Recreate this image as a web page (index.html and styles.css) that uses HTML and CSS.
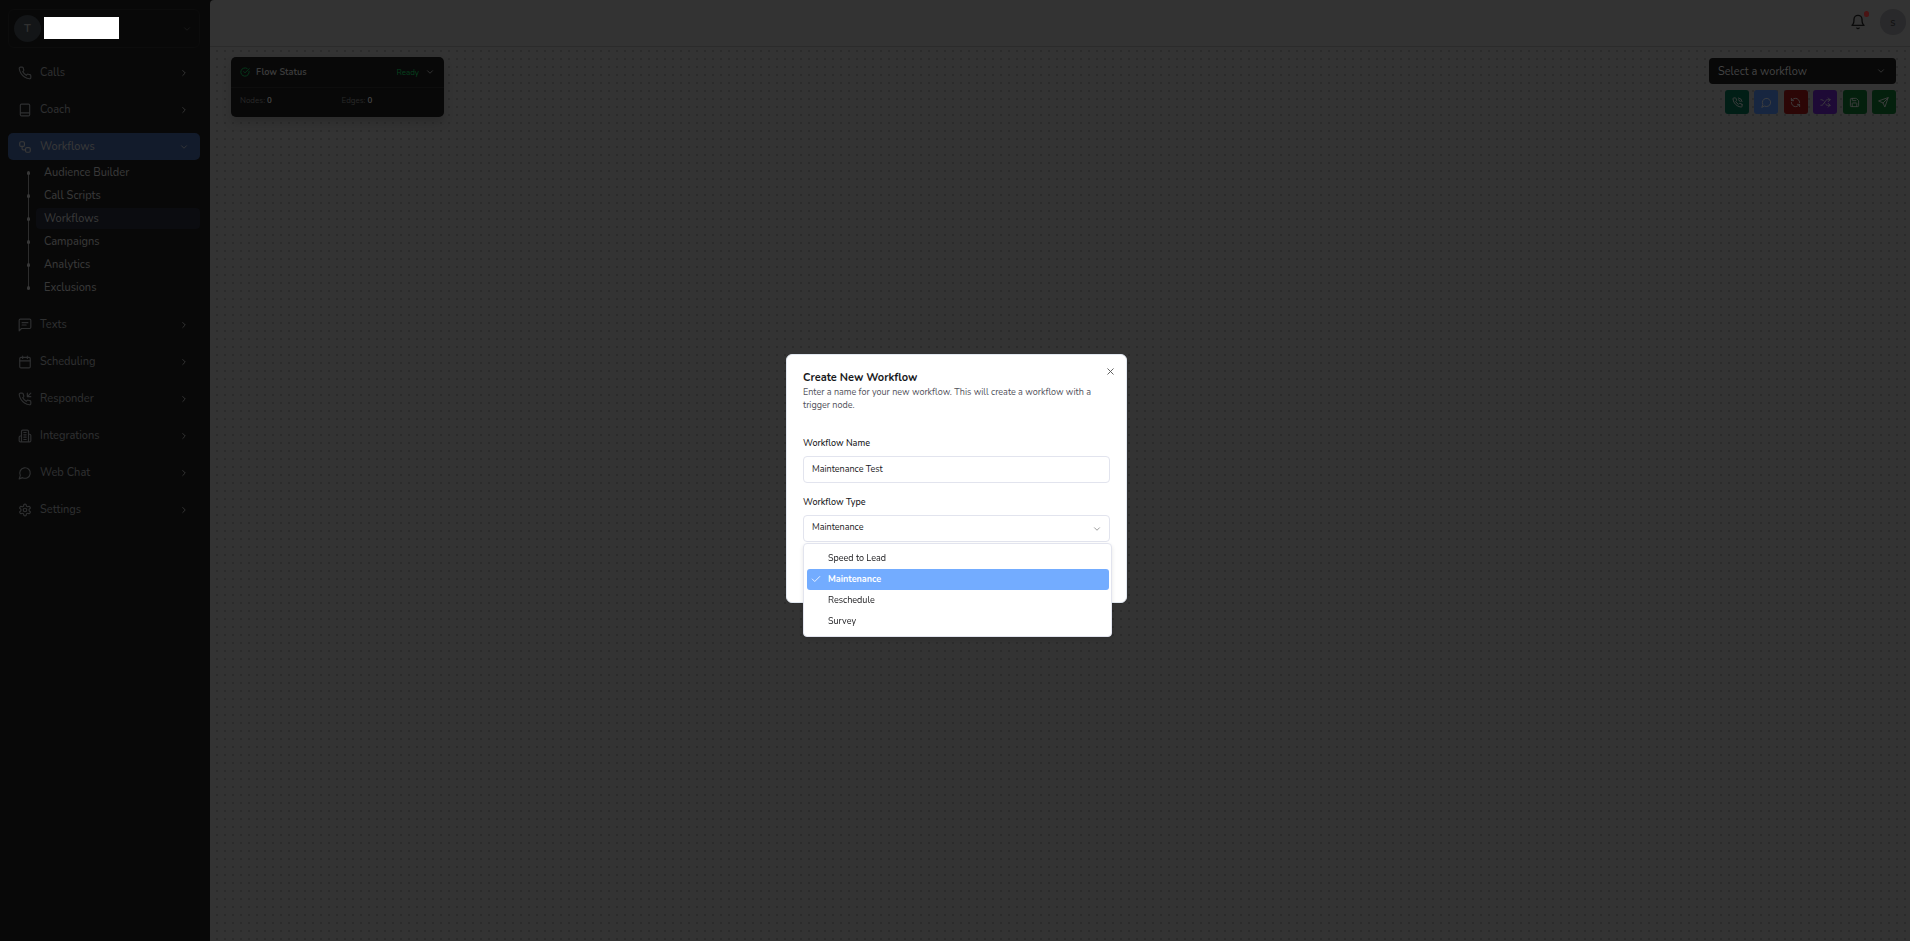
FILE: index.html
```html
<!DOCTYPE html>
<html lang="en">
<head>
  <meta charset="UTF-8">
  <title>Workflows</title>
  <link rel="stylesheet" href="styles.css">
</head>
<body>

  <!-- Shared icons -->
  <svg class="sprite" aria-hidden="true">
    <symbol id="chev-right" viewBox="0 0 24 24"><path d="m9 18 6-6-6-6"/></symbol>
    <symbol id="chev-down" viewBox="0 0 24 24"><path d="m6 9 6 6 6-6"/></symbol>
    <symbol id="phone" viewBox="0 0 24 24"><path d="M22 16.92v3a2 2 0 0 1-2.18 2 19.79 19.79 0 0 1-8.63-3.07 19.5 19.5 0 0 1-6-6 19.79 19.79 0 0 1-3.07-8.67A2 2 0 0 1 4.11 2h3a2 2 0 0 1 2 1.72c.127.96.361 1.903.7 2.81a2 2 0 0 1-.45 2.11L8.09 9.91a16 16 0 0 0 6 6l1.27-1.27a2 2 0 0 1 2.11-.45c.907.339 1.85.573 2.81.7A2 2 0 0 1 22 16.92z"/></symbol>
    <symbol id="book" viewBox="0 0 24 24"><path d="M4 17V4a2 2 0 0 1 2-2h12a2 2 0 0 1 2 2v16a2 2 0 0 1-2 2H6a2 2 0 0 1-2-2zM4 17h16"/></symbol>
    <symbol id="workflow" viewBox="0 0 24 24"><rect x="3" y="3" width="8" height="8" rx="2"/><path d="M7 11v4a2 2 0 0 0 2 2h4"/><rect x="13" y="13" width="8" height="8" rx="2"/></symbol>
    <symbol id="message" viewBox="0 0 24 24"><path d="M22 16a2 2 0 0 1-2 2H6l-4 4V4a2 2 0 0 1 2-2h16a2 2 0 0 1 2 2z"/><path d="M7 8h10M7 12h7"/></symbol>
    <symbol id="calendar" viewBox="0 0 24 24"><path d="M8 2v4M16 2v4M3 10h18"/><rect x="3" y="4" width="18" height="18" rx="2"/></symbol>
    <symbol id="phone-in" viewBox="0 0 24 24"><path d="M16 2v6h6M22 2l-6 6"/><path d="M22 16.92v3a2 2 0 0 1-2.18 2 19.79 19.79 0 0 1-8.63-3.07 19.5 19.5 0 0 1-6-6 19.79 19.79 0 0 1-3.07-8.67A2 2 0 0 1 4.11 2h3a2 2 0 0 1 2 1.72c.127.96.361 1.903.7 2.81a2 2 0 0 1-.45 2.11L8.09 9.91a16 16 0 0 0 6 6l1.27-1.27a2 2 0 0 1 2.11-.45c.907.339 1.85.573 2.81.7A2 2 0 0 1 22 16.92z"/></symbol>
    <symbol id="building" viewBox="0 0 24 24"><path d="M6 22V4a2 2 0 0 1 2-2h8a2 2 0 0 1 2 2v18ZM6 12H4a2 2 0 0 0-2 2v6a2 2 0 0 0 2 2h2M18 9h2a2 2 0 0 1 2 2v9a2 2 0 0 1-2 2h-2M10 6h4M10 10h4M10 14h4M10 18h4"/></symbol>
    <symbol id="chat" viewBox="0 0 24 24"><path d="M7.9 20A9 9 0 1 0 4 16.100L2 22Z"/></symbol>
    <symbol id="gear" viewBox="0 0 24 24"><path d="M12.220 2h-.44a2 2 0 0 0-2 2v.18a2 2 0 0 1-1 1.730l-.43.25a2 2 0 0 1-2 0l-.15-.08a2 2 0 0 0-2.730.73l-.22.38a2 2 0 0 0 .73 2.730l.15.1a2 2 0 0 1 1 1.720v.51a2 2 0 0 1-1 1.740l-.15.09a2 2 0 0 0-.73 2.730l.22.38a2 2 0 0 0 2.730.73l.15-.08a2 2 0 0 1 2 0l.43.25a2 2 0 0 1 1 1.730V20a2 2 0 0 0 2 2h.44a2 2 0 0 0 2-2v-.18a2 2 0 0 1 1-1.730l.43-.25a2 2 0 0 1 2 0l.15.08a2 2 0 0 0 2.730-.73l.22-.39a2 2 0 0 0-.73-2.730l-.15-.08a2 2 0 0 1-1-1.740v-.5a2 2 0 0 1 1-1.740l.15-.09a2 2 0 0 0 .73-2.730l-.22-.38a2 2 0 0 0-2.730-.73l-.15.08a2 2 0 0 1-2 0l-.43-.25a2 2 0 0 1-1-1.730V4a2 2 0 0 0-2-2z"/><circle cx="12" cy="12" r="3"/></symbol>
  </svg>

  <div class="app">
    <aside class="sidebar">
      <button class="team" aria-label="Switch team">
        <span class="team-avatar">T</span>
        <span class="team-name"></span>
        <svg class="chev"><use href="#chev-down"/></svg>
      </button>

      <nav class="nav">
        <a class="nav-item" href="#"><svg><use href="#phone"/></svg>Calls<svg class="chev"><use href="#chev-right"/></svg></a>
        <a class="nav-item" href="#"><svg><use href="#book"/></svg>Coach<svg class="chev"><use href="#chev-right"/></svg></a>
        <div class="nav-group">
          <a class="nav-item active" href="#"><svg><use href="#workflow"/></svg>Workflows<svg class="chev"><use href="#chev-down"/></svg></a>
          <div class="subnav">
            <a href="#">Audience Builder</a>
            <a href="#">Call Scripts</a>
            <a class="current" href="#">Workflows</a>
            <a href="#">Campaigns</a>
            <a href="#">Analytics</a>
            <a href="#">Exclusions</a>
          </div>
        </div>
        <a class="nav-item" href="#"><svg><use href="#message"/></svg>Texts<svg class="chev"><use href="#chev-right"/></svg></a>
        <a class="nav-item" href="#"><svg><use href="#calendar"/></svg>Scheduling<svg class="chev"><use href="#chev-right"/></svg></a>
        <a class="nav-item" href="#"><svg><use href="#phone-in"/></svg>Responder<svg class="chev"><use href="#chev-right"/></svg></a>
        <a class="nav-item" href="#"><svg><use href="#building"/></svg>Integrations<svg class="chev"><use href="#chev-right"/></svg></a>
        <a class="nav-item" href="#"><svg><use href="#chat"/></svg>Web Chat<svg class="chev"><use href="#chev-right"/></svg></a>
        <a class="nav-item" href="#"><svg><use href="#gear"/></svg>Settings<svg class="chev"><use href="#chev-right"/></svg></a>
      </nav>
    </aside>

    <main class="main">
      <header class="topbar">
        <button class="bell" aria-label="Notifications">
          <svg viewBox="0 0 24 24"><path d="M6 8a6 6 0 0 1 12 0c0 7 3 9 3 9H3s3-2 3-9M10.300 21a1.940 1.940 0 0 0 3.400 0"/></svg>
          <span class="bell-dot"></span>
        </button>
        <button class="user">s</button>
      </header>

      <section class="canvas">
        <div class="status">
          <div class="status-head">
            <svg class="ok" viewBox="0 0 24 24"><path d="M21.800 10A10 10 0 1 1 17 3.335M9 11l3 3L22 4"/></svg>
            <span class="status-title">Flow Status</span>
            <span class="ready">Ready</span>
            <svg class="chev"><use href="#chev-down"/></svg>
          </div>
          <div class="status-body">
            <span>Nodes: <b>0</b></span>
            <span>Edges: <b>0</b></span>
          </div>
        </div>

        <div class="tools">
          <div class="picker">
            <select aria-label="Workflow">
              <option>Select a workflow</option>
            </select>
            <svg class="chev"><use href="#chev-down"/></svg>
          </div>
          <div class="tool-row">
            <button class="tool teal" aria-label="Call"><svg viewBox="0 0 24 24"><path d="M14.050 2a9 9 0 0 1 8 7.940M14.050 6A5 5 0 0 1 18 10"/><use href="#phone"/></svg></button>
            <button class="tool blue" aria-label="Message"><svg><use href="#chat"/></svg></button>
            <button class="tool red" aria-label="Reset"><svg viewBox="0 0 24 24"><path d="M21 12a9 9 0 0 0-9-9 9.750 9.750 0 0 0-6.740 2.740L3 8M3 3v5h5M3 12a9 9 0 0 0 9 9 9.750 9.750 0 0 0 6.740-2.740L21 16M16 16h5v5"/></svg></button>
            <button class="tool purple" aria-label="Shuffle"><svg viewBox="0 0 24 24"><path d="M2 18h1.400c1.300 0 2.500-.6 3.300-1.700l6.100-8.600c.7-1.100 2-1.700 3.300-1.700H22M18 2l4 4-4 4M2 6h1.900c1.500 0 2.900.9 3.600 2.200M22 18h-5.900c-1.300 0-2.600-.7-3.300-1.800l-.5-.8M18 14l4 4-4 4"/></svg></button>
            <button class="tool green" aria-label="Save"><svg viewBox="0 0 24 24"><path d="M15.200 3a2 2 0 0 1 1.400.6l3.800 3.800a2 2 0 0 1 .6 1.400V19a2 2 0 0 1-2 2H5a2 2 0 0 1-2-2V5a2 2 0 0 1 2-2zM17 21v-7a1 1 0 0 0-1-1H8a1 1 0 0 0-1 1v7M7 3v4a1 1 0 0 0 1 1h7"/></svg></button>
            <button class="tool green" aria-label="Publish"><svg viewBox="0 0 24 24"><path d="M22 2 11 13M22 2l-7 20-4-9-9-4z"/></svg></button>
          </div>
        </div>
      </section>
    </main>
  </div>

  <div class="overlay">
    <form class="modal" role="dialog" aria-labelledby="modal-title">
      <button class="close" type="button" aria-label="Close"><svg viewBox="0 0 24 24"><path d="M18 6 6 18M6 6l12 12"/></svg></button>
      <h2 id="modal-title">Create New Workflow</h2>
      <p>Enter a name for your new workflow. This will create a workflow with a trigger node.</p>

      <label for="wf-name">Workflow Name</label>
      <input id="wf-name" type="text" value="Maintenance Test">

      <label for="wf-type">Workflow Type</label>
      <div class="select-wrap">
        <select id="wf-type">
          <option>Speed to Lead</option>
          <option selected>Maintenance</option>
          <option>Reschedule</option>
          <option>Survey</option>
        </select>
        <svg class="chev"><use href="#chev-down"/></svg>
        <ul class="options" role="listbox" aria-label="Workflow Type">
          <li role="option">Speed to Lead</li>
          <li role="option" class="selected" aria-selected="true"><svg viewBox="0 0 24 24"><path d="M21 6 9 18l-6-6"/></svg>Maintenance</li>
          <li role="option">Reschedule</li>
          <li role="option">Survey</li>
        </ul>
      </div>
    </form>
  </div>

</body>
</html>
```
FILE: styles.css
```css
* {
  box-sizing: border-box;
}

body {
  margin: 0;
  font-family: Nunito, Lato, sans-serif;
  font-size: 11px;
  background: #080808;
  color: #3a3a3a;
}

button, input, select {
  font-family: inherit;
  font-size: inherit;
}

button {
  border: none;
  padding: 0;
  cursor: pointer;
}

a {
  color: inherit;
  text-decoration: none;
}

svg {
  flex: none;
  width: 14px;
  height: 14px;
  fill: none;
  stroke: currentColor;
  stroke-width: 2;
  stroke-linecap: round;
  stroke-linejoin: round;
}

.sprite {
  display: none;
}

.chev {
  width: 10px;
  height: 10px;
}

.app {
  display: flex;
  min-height: 100vh;
}

/* Sidebar */
.sidebar {
  width: 210px;
  flex: none;
  padding: 9px 10px 9px 8px;
}

.team {
  display: flex;
  align-items: center;
  width: 100%;
  height: 39px;
  padding: 0 7px 0 5px;
  background: transparent;
  border: 1px solid #0c0c0c;
  border-radius: 6px;
  color: #1c1c1c;
}

.team-avatar {
  display: flex;
  align-items: center;
  justify-content: center;
  width: 27px;
  height: 27px;
  border-radius: 50%;
  background: #131517;
  color: #303030;
  font-weight: bold;
}

.team-name {
  width: 75px;
  height: 22px;
  margin: 0 auto 2px 3px;
  background: #fff;
}

.nav {
  display: flex;
  flex-direction: column;
  gap: 10px;
  margin-top: 11px;
}

.nav-item {
  display: flex;
  align-items: center;
  height: 27px;
  padding: 0 11px 0 10px;
  gap: 8px;
  border-radius: 5px;
  font-weight: 500;
  color: #2e2f30;
}

.nav-item .chev {
  margin-left: auto;
  color: #3a3a3a;
}

.nav-item.active {
  background: #121b2b;
  color: #383838;
}

.subnav {
  position: relative;
  display: flex;
  flex-direction: column;
  gap: 2px;
  padding: 2px 0 3px 28px;
}

.subnav::before {
  content: "";
  position: absolute;
  left: 20px;
  top: 14px;
  bottom: 14px;
  width: 1px;
  background: #2c2c2c;
}

.subnav a {
  position: relative;
  height: 21px;
  line-height: 21px;
  padding-left: 8px;
  border-radius: 4px;
  font-weight: 500;
  color: #383838;
}

.subnav a::before {
  content: "";
  position: absolute;
  left: -9px;
  top: 9px;
  width: 3px;
  height: 4px;
  border-radius: 2px;
  background: #383838;
}

.subnav a.current {
  background: #0b0c10;
}

/* Main area */
.main {
  flex: 1;
  display: flex;
  flex-direction: column;
  background: #333;
  border-top-left-radius: 4px;
}

.topbar {
  display: flex;
  align-items: center;
  justify-content: flex-end;
  gap: 14px;
  height: 47px;
  padding: 0 4px 2px 0;
  border-bottom: 1px solid #2b2b2b;
}

.bell {
  position: relative;
  display: flex;
  background: transparent;
  color: #0a0a0a;
}

.bell svg {
  width: 16px;
  height: 16px;
}

.bell-dot {
  position: absolute;
  top: -3px;
  right: -3px;
  width: 5px;
  height: 6px;
  border-radius: 3px;
  background: #4a1414;
}

.user {
  width: 26px;
  height: 26px;
  border-radius: 50%;
  background: #29292b;
  color: #101010;
}

.canvas {
  flex: 1;
  display: flex;
  justify-content: space-between;
  align-items: flex-start;
  padding: 10px 14px 10px 21px;
  background-image: radial-gradient(circle at 7px 4px, #2b2b2b 1px, transparent 1px);
  background-size: 8px 8px;
}

.status {
  width: 213px;
  border-radius: 5px;
  background: #080808;
  box-shadow: 0 6px 10px rgba(0, 0, 0, 0.15);
}

.status-head {
  display: flex;
  align-items: center;
  height: 31px;
  padding: 0 9px;
  border-bottom: 1px solid #0d0d0d;
}

.status-title {
  margin-left: 6px;
  font-size: 9px;
  font-weight: bold;
}

.status-head .ok {
  width: 10px;
  height: 10px;
  color: #06401e;
}

.ready {
  margin-left: auto;
  margin-right: 6px;
  font-size: 8px;
  color: #06401e;
}

.status-body {
  display: grid;
  grid-template-columns: 1fr 1fr;
  gap: 8px;
  padding: 7px 9px 10px;
  font-size: 8px;
  line-height: 12px;
  color: #282828;
}

.status-body b {
  color: #444;
}

.tools {
  display: flex;
  flex-direction: column;
  align-items: flex-end;
  gap: 6px;
  width: 187px;
  padding-top: 1px;
}

.picker {
  position: relative;
  width: 100%;
}

.picker select {
  display: block;
  appearance: none;
  width: 100%;
  height: 26px;
  padding: 0 9px;
  border: none;
  border-radius: 4px;
  background: #080808;
  color: #444;
}

.picker .chev {
  position: absolute;
  right: 10px;
  top: 8px;
}

.tool-row {
  display: flex;
  justify-content: space-between;
  width: 171px;
}

.tool {
  display: flex;
  align-items: center;
  justify-content: center;
  width: 24px;
  height: 24px;
  border-radius: 3px;
  color: #404040;
}

.tool svg {
  width: 11px;
  height: 11px;
}

.teal { background: #011e16; }
.blue { background: #172640; }
.red { background: #2c0606; }
.purple { background: #1e0a36; }
.green { background: #04200d; }

/* Create workflow dialog */
.overlay {
  position: fixed;
  inset: 0;
  display: flex;
  align-items: center;
  justify-content: center;
  padding: 15px 0 0 3px;
}

.modal {
  position: relative;
  width: 341px;
  padding: 15px 16px 60px;
  border: 1px solid #e2e8f0;
  border-radius: 6px;
  background: #fff;
  color: #18181b;
  font-size: 9px;
}

.modal h2 {
  margin: 0;
  font-size: 11px;
  line-height: 16px;
  font-weight: bold;
}

.modal p {
  margin: 0 0 24px;
  line-height: 13px;
  color: #52525b;
}

.modal label {
  display: block;
  margin-bottom: 5px;
  line-height: 15px;
  font-weight: 500;
}

.modal input,
.modal select {
  display: block;
  appearance: none;
  width: 100%;
  height: 27px;
  padding: 0 8px;
  border: 1px solid #e2e4ee;
  border-radius: 4px;
  background: #fff;
  color: #18181b;
}

.modal input {
  margin-bottom: 12px;
}

.modal select {
  padding-bottom: 2px;
}

.select-wrap {
  position: relative;
}

.select-wrap .chev {
  position: absolute;
  right: 8px;
  top: 9px;
  color: #888;
}

.close {
  position: absolute;
  top: 11px;
  right: 10px;
  display: flex;
  background: transparent;
  color: #555;
}

.close svg {
  width: 11px;
  height: 11px;
}

.options {
  position: absolute;
  top: 28px;
  left: 0;
  right: -2px;
  margin: 0;
  padding: 4px 2px 4px 3px;
  list-style: none;
  border: 1px solid #e2e4ee;
  border-radius: 4px;
  background: #fff;
  box-shadow: 0 2px 4px rgba(0, 0, 0, 0.1);
}

.options li {
  height: 21px;
  padding-left: 21px;
  line-height: 21px;
  border-radius: 3px;
}

.options .selected {
  position: relative;
  background: #73acff;
  color: #fff;
  font-weight: bold;
}

.options .selected svg {
  position: absolute;
  left: 4px;
  top: 5px;
  width: 10px;
  height: 10px;
}
```
